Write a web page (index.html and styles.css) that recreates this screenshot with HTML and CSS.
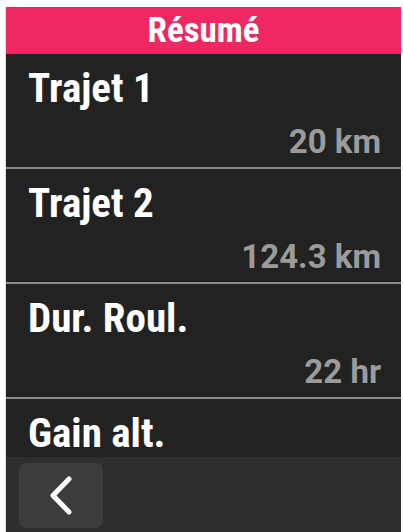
FILE: index.html
```html
<!DOCTYPE html>
<html lang="fr">
<head>
    <meta charset="UTF-8">
    <meta name="viewport" content="width=device-width, initial-scale=1.0">
    <title>Résumé</title>
    <link rel="stylesheet" href="styles.css">
</head>
<body>

<div class="screen">

    <!-- Title bar -->
    <div class="title-bar">Résumé</div>

    <!-- Summary list -->
    <div class="list">
        <div class="row">
            <div class="label">Trajet 1</div>
            <div class="value">20 km</div>
        </div>
        <div class="row">
            <div class="label">Trajet 2</div>
            <div class="value">124.3 km</div>
        </div>
        <div class="row">
            <div class="label">Dur. Roul.</div>
            <div class="value">22 hr</div>
        </div>
        <div class="row">
            <div class="label">Gain alt.</div>
        </div>
    </div>

    <!-- Bottom bar -->
    <div class="bottom-bar">
        <button type="button" class="back-btn">
            <svg width="24" height="40" viewBox="0 0 24 40">
                <path d="M20 3 L4 19.5 L20 36" fill="none" stroke="#fff" stroke-width="5" stroke-linecap="round" stroke-linejoin="round"/>
            </svg>
        </button>
    </div>

</div>

</body>
</html>
```

FILE: styles.css
```css
body {
    margin: 0;
    padding: 0;
    background-color: #fff;
    overflow: hidden;
}

.screen {
    margin: 7px 0 0 5px;
    width: 395px;
    height: 525px;
    background-color: #222;
    border-left: 1px solid #ddd;
    display: flex;
    flex-direction: column;
    font-family: "Roboto Condensed", "Liberation Sans Narrow", "DejaVu Sans Condensed", Roboto, sans-serif;
    font-stretch: condensed;
}

.title-bar {
    height: 47px;
    background-color: #ef2863;
    color: #fff;
    text-align: center;
    font-size: 35px;
    font-weight: bold;
    line-height: 47px;
}

.list {
    flex: 1;
    overflow: hidden;
}

.row {
    height: 113px;
    border-bottom: 2px solid #8a8a8a;
}

.label {
    color: #fff;
    font-size: 41px;
    font-weight: bold;
    padding: 9px 0 0 22px;
    line-height: 50px;
}

.value {
    font-family: Roboto, sans-serif;
    font-stretch: normal;
    color: #9b9b9b;
    font-size: 33px;
    font-weight: bold;
    text-align: right;
    padding-right: 20px;
    margin-top: 9px;
    line-height: 40px;
}

.bottom-bar {
    height: 75px;
    background-color: #2e2e2e;
    padding: 6px 0 0 13px;
    box-sizing: border-box;
}

.back-btn {
    width: 84px;
    height: 65px;
    border: none;
    border-radius: 7px;
    background-color: #3b3c3e;
    padding: 0;
    display: flex;
    align-items: center;
    justify-content: center;
    cursor: pointer;
}
```
